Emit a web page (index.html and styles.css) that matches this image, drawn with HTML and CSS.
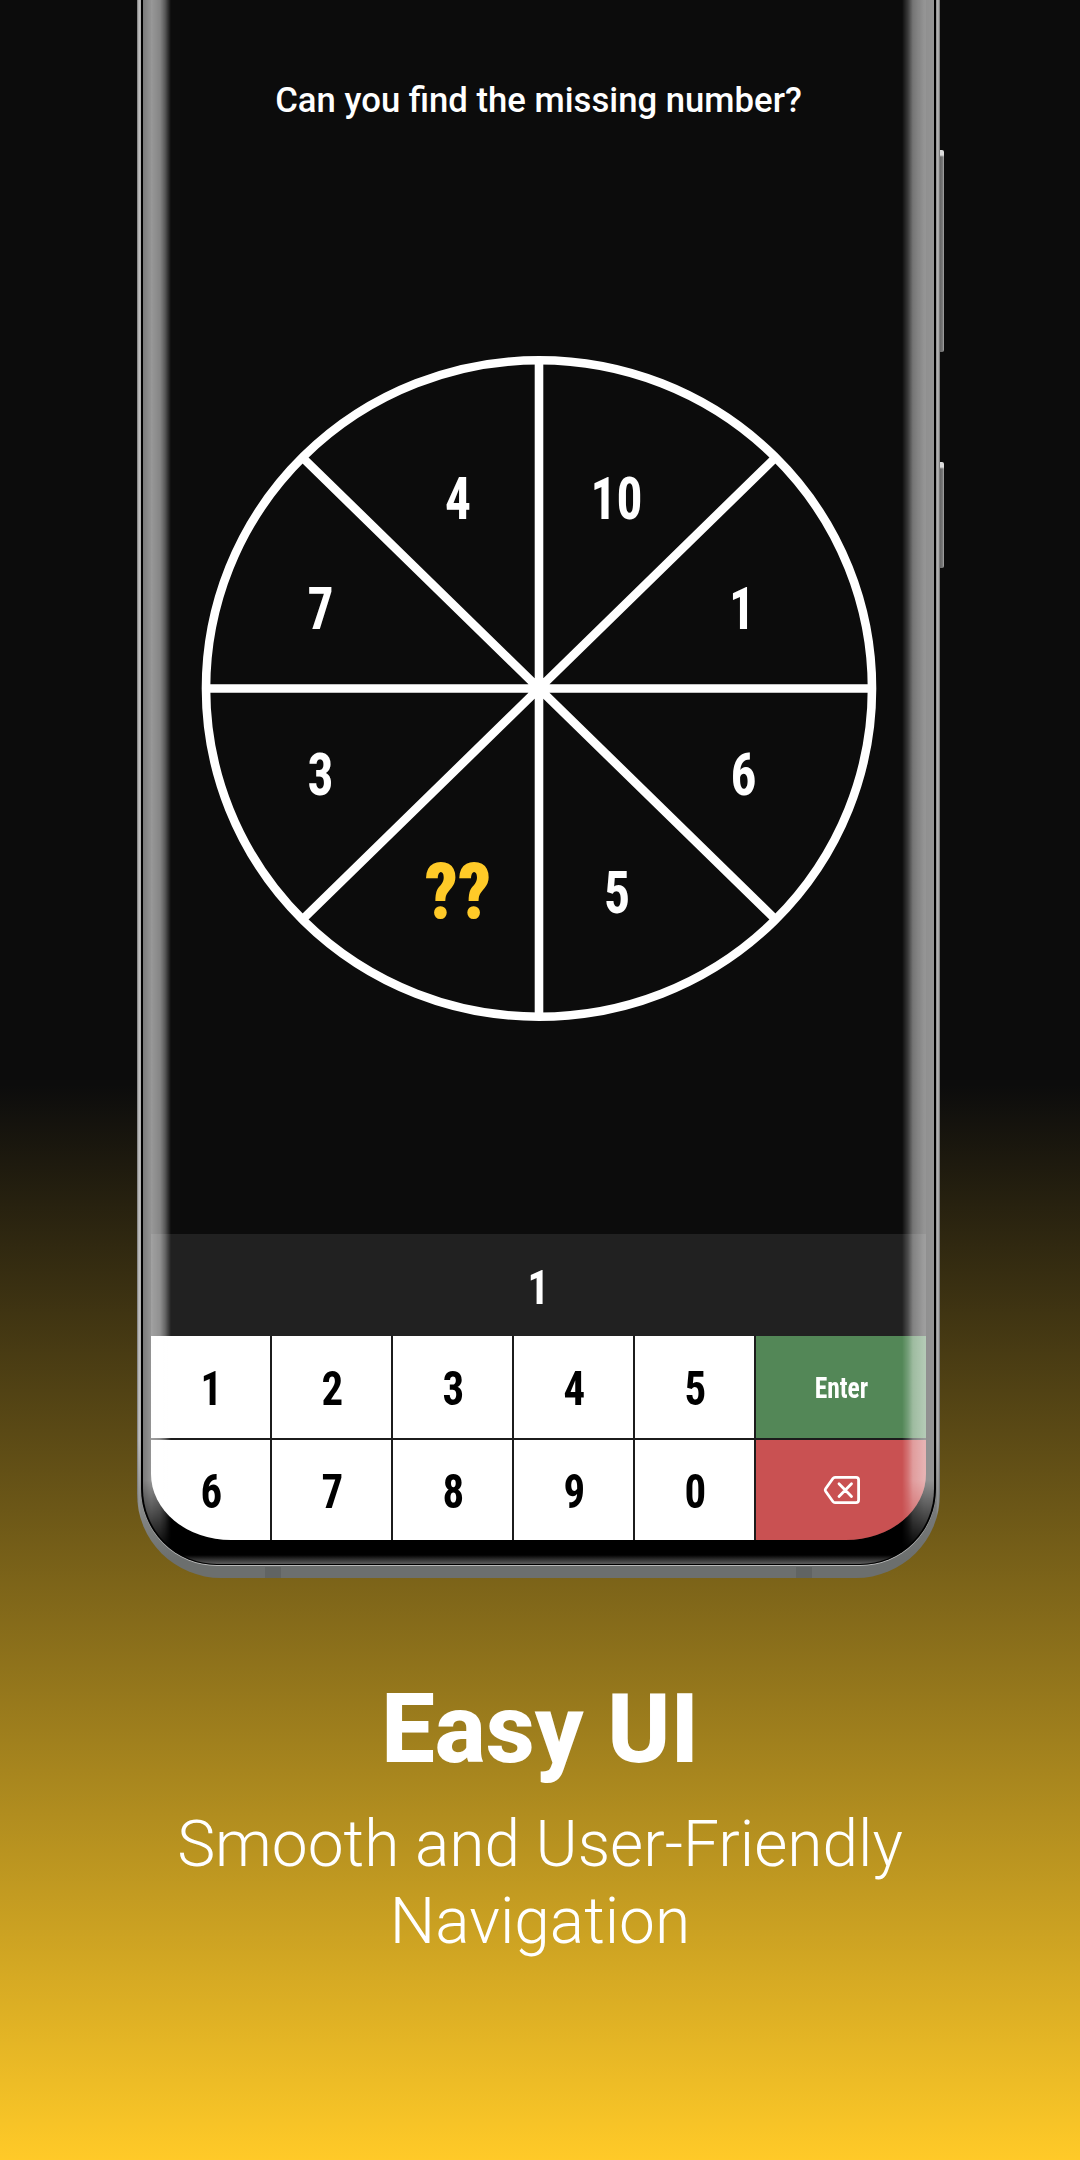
FILE: index.html
```html
<!DOCTYPE html>
<html lang="en">
<head>
<meta charset="utf-8">
<title>Easy UI</title>
<link rel="stylesheet" href="styles.css">
</head>
<body>
<main class="promo">
  <div class="phone">
    <span class="side-button volume"></span>
    <span class="side-button power"></span>
    <span class="antenna antenna-left"></span>
    <span class="antenna antenna-right"></span>
    <div class="bezel">
      <div class="screen">
        <h1 class="question">Can you find the missing number?</h1>
        <svg class="wheel" viewBox="0 0 776 670" width="776" height="670">
          <g fill="none" stroke="#fff" stroke-width="8.6">
            <ellipse cx="388" cy="334.5" rx="333" ry="328.2"/>
            <path d="M388 6V663M55 334.5H721M153 105L623 564M623 105L153 564"/>
          </g>
          <g class="wheel-numbers">
            <text transform="translate(307 164.500) scale(.88 1)">4</text>
            <text transform="translate(465.500 164.500) scale(.88 1)">10</text>
            <text transform="translate(169.500 275) scale(.88 1)">7</text>
            <text transform="translate(591 275) scale(.88 1)">1</text>
            <text transform="translate(169.500 441.200) scale(.88 1)">3</text>
            <text transform="translate(592.500 441.200) scale(.88 1)">6</text>
            <text transform="translate(466 558.500) scale(.88 1)">5</text>
            <text class="missing" transform="translate(307 565) scale(.93 1)">??</text>
          </g>
        </svg>
        <div class="answer"><span class="num">1</span></div>
        <div class="keypad">
          <button class="key"><span class="num">1</span></button>
          <button class="key"><span class="num">2</span></button>
          <button class="key"><span class="num">3</span></button>
          <button class="key"><span class="num">4</span></button>
          <button class="key"><span class="num">5</span></button>
          <button class="key enter"><span class="label">Enter</span></button>
          <button class="key"><span class="num">6</span></button>
          <button class="key"><span class="num">7</span></button>
          <button class="key"><span class="num">8</span></button>
          <button class="key"><span class="num">9</span></button>
          <button class="key"><span class="num">0</span></button>
          <button class="key erase" aria-label="Delete">
            <svg width="38" height="30" viewBox="0 0 38 30" fill="none" stroke="#fff" stroke-width="2.8" stroke-linecap="round" stroke-linejoin="round"><path d="M12 2.400H33Q35.600 2.400 35.600 5V25Q35.600 27.600 33 27.600H12Q10.700 27.600 9.900 26.500L2.600 16.200Q1.800 15 2.600 13.800L9.900 3.500Q10.700 2.400 12 2.400ZM16 8.800L28.500 21.500M28.500 8.800L16 21.500"/></svg>
          </button>
        </div>
      </div>
      <div class="glare"></div>
    </div>
  </div>
  <section class="caption">
    <h2>Easy UI</h2>
    <p>Smooth and User-Friendly<br>Navigation</p>
  </section>
</main>
</body>
</html>
```
FILE: styles.css
```css
* { box-sizing: border-box; }

body { margin: 0; font-family: Roboto, sans-serif; color: #fff; }

h1, h2, p { margin: 0; }

.promo {
  width: 1080px;
  height: 2160px;
  overflow: hidden;
  background: linear-gradient(#0c0c0c 1085px, #ffca28 2160px);
}

/* Device frame */
.phone {
  position: relative;
  width: 803px;
  height: 1578px;
  margin-left: 137px;
  padding: 0 4px 13px 4px;
  border-radius: 0 0 84px 84px / 0 0 84px 84px;
  background:
    linear-gradient(transparent 1440px, #6c6f6e 1560px),
    linear-gradient(90deg, #777 0, #c4c4c4 2px, #aaa 4px, #888 50%, #888 799px, #bdbdbd 801px, #666 803px);
}

.side-button {
  position: absolute;
  left: 803px;
  width: 4px;
  border-radius: 0 2px 2px 0;
  background: linear-gradient(#ddd 0, #ddd 5px, transparent 7px), linear-gradient(90deg, #666, #777 60%, #aaa);
}
.volume { top: 150px; height: 202px; }
.power { top: 462px; height: 106px; }

.antenna {
  position: absolute;
  top: 1567px;
  width: 16px;
  height: 11px;
  background: #616463;
}
.antenna-left { left: 128px; }
.antenna-right { left: 659px; }

.bezel {
  position: relative;
  height: 1565px;
  padding: 0 8px 24px 8px;
  border: solid #000;
  border-width: 0 2px 1px;
  border-radius: 0 0 76px 76px / 0 0 76px 76px;
  background: linear-gradient(#000 1555px, #555 1563px);
  box-shadow: 0 1px 0 #b8b8b8;
  overflow: hidden;
}

.screen {
  display: flex;
  flex-direction: column;
  width: 775px;
  height: 1540px;
  overflow: hidden;
  border-radius: 0 0 80px 80px / 0 0 66px 66px;
  background: #0c0c0c;
}

.question {
  height: 354px;
  padding-top: 80px;
  font-size: 34.700px;
  line-height: 40px;
  font-weight: 500;
  text-align: center;
}

.wheel { flex: none; display: block; }

.wheel-numbers {
  font-size: 58.500px;
  font-weight: 700;
  font-stretch: 75%;
  fill: #fff;
  text-anchor: middle;
}
.wheel-numbers .missing { font-size: 78px; font-weight: 900; fill: #ffca28; }

.answer {
  display: flex;
  justify-content: center;
  align-items: center;
  height: 102px;
  margin-top: auto;
  padding-top: 6px;
  background: #212121;
}

.num {
  font-size: 48.800px;
  line-height: 56px;
  font-weight: 700;
  font-stretch: 75%;
  transform: scaleX(.88);
}

/* Glare along the curved edges of the glass */
.glare {
  position: absolute;
  inset: 0;
  background:
    linear-gradient(90deg, rgba(255,255,255,.48) 0, rgba(255,255,255,.58) 8px, rgba(255,255,255,.5) 17px, rgba(255,255,255,.32) 22px, transparent 28px),
    linear-gradient(270deg, rgba(255,255,255,.58) 0, rgba(255,255,255,.56) 10px, rgba(255,255,255,.44) 21px, rgba(255,255,255,.2) 26px, transparent 32px);
  -webkit-mask-image: linear-gradient(#000 1480px, transparent 1552px);
  mask-image: linear-gradient(#000 1480px, transparent 1552px);
}

/* Keypad */
.keypad {
  display: grid;
  grid-template-columns: repeat(5, 119.100px) 1fr;
  grid-template-rows: 102px 100px;
  gap: 2px;
  height: 204px;
  background: #1c1c1c;
}
.key {
  display: flex;
  justify-content: center;
  align-items: center;
  padding: 4px 0 0 1px;
  border: 0;
  background: #fff;
  color: #000;
  font-family: inherit;
}
.enter { padding: 2px 0 0; background: #538757; color: #fff; }
.erase { padding: 0 0 0 2px; background: #c95152; }
.label { font-size: 29px; font-weight: 700; font-stretch: 75%; transform: scaleX(.88); }

/* Caption */
.caption { padding-top: 95px; text-align: center; }
.caption h2 { font-size: 95.500px; line-height: 112px; font-weight: 800; }
.caption p { margin-top: 21px; font-size: 64px; line-height: 77px; font-weight: 300; }
```
